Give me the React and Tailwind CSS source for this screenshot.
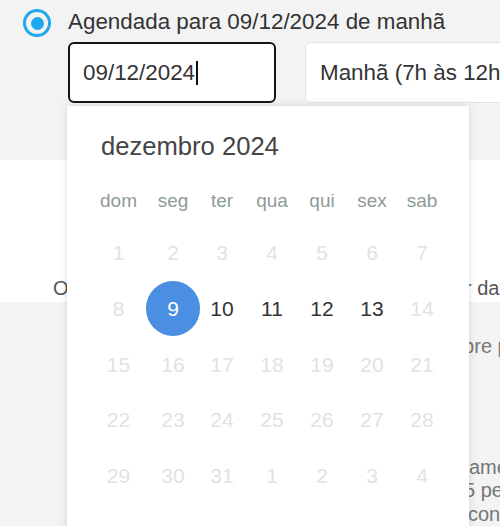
import React from "react";

const rows = [
  [1, 2, 3, 4, 5, 6, 7],
  [8, 9, 10, 11, 12, 13, 14],
  [15, 16, 17, 18, 19, 20, 21],
  [22, 23, 24, 25, 26, 27, 28],
  [29, 30, 31, 1, 2, 3, 4],
];
const heads = ["dom", "seg", "ter", "qua", "qui", "sex", "sab"];
const active = [10, 11, 12, 13];

function Day({ n, ri }) {
  const isSel = ri === 1 && n === 9;
  const isActive = ri === 1 && active.includes(n);
  return (
    <div className="flex h-[55.75px] items-center justify-center">
      {isSel ? (
        <div className="flex h-[55px] w-[54px] shrink-0 items-center justify-center rounded-full bg-[#4a8fe2] text-white">
          {n}
        </div>
      ) : (
        <span className={isActive ? "text-[#333333]" : "text-[#dfe3e3]"}>{n}</span>
      )}
    </div>
  );
}

export default function App() {
  return (
    <div className="relative h-[526px] w-[500px] overflow-hidden bg-[#f3f3f3] font-['Liberation_Sans',Arial,sans-serif]">
      {/* top section */}
      <div className="h-[160px]">
        <div className="flex items-start pl-[23px] pt-[9px]">
          <div className="flex h-[28px] w-[28px] shrink-0 items-center justify-center rounded-full border-[3px] border-[#1fa8ee]">
            <div className="h-[13px] w-[13px] rounded-full bg-[#1fa8ee]" />
          </div>
          <div className="ml-[17px] whitespace-nowrap text-[22.4px] leading-[26px] text-[#333333]">
            Agendada para 09/12/2024 de manhã
          </div>
        </div>
        <div className="mt-[5px] flex pl-[68px]">
          <div className="flex h-[61px] w-[208px] shrink-0 items-center rounded-[6px] border-2 border-[#161616] bg-white pl-[13px] text-[22.4px] text-[#333333]">
            <span>09/12/2024</span>
            <span className="ml-[1px] inline-block h-[24px] w-[1.5px] bg-[#111111]" />
          </div>
          <div className="ml-[29px] flex h-[61px] w-[260px] shrink-0 items-center whitespace-nowrap rounded-[6px] border border-[#e4e4e4] bg-white pl-[14px] text-[22.4px] text-[#333333]">
            Manhã (7h às 12h)
          </div>
        </div>
      </div>

      {/* white band */}
      <div className="flex h-[142px] flex-col justify-end bg-white pb-[3px]">
        <div className="flex whitespace-nowrap text-[20px] leading-[22px] text-[#555555]">
          <span className="ml-[53px] w-[412px] shrink-0 overflow-hidden">O agendamento é feito po</span>
          <span>r data</span>
        </div>
      </div>

      {/* gray lower section */}
      <div className="whitespace-nowrap text-[20px] leading-[22px] text-[#777777]">
        <p className="mt-[33px] pl-[442px]">sobre prazos</p>
        <p className="mt-[99px] pl-[469px] leading-[23px]">amento</p>
        <p className="pl-[464px] leading-[23px]">5 pessoas</p>
        <p className="pl-[468px] leading-[24px]">confirmação</p>
      </div>

      {/* date picker popup */}
      <div className="absolute left-[67px] top-[106px] h-[440px] w-[402px] bg-white pt-[25px] shadow-[0_0_8px_rgba(0,0,0,0.13)]">
        <div className="ml-[34px] h-[30px] text-[25.6px] leading-[30px] text-[#444444]">dezembro 2024</div>
        <div className="mt-[20px] grid h-[40px] grid-cols-[61px_48px_50px_50px_50px_50px_50px] pl-[21px] text-[19px] leading-[40px] text-[#8d9b9a]">
          {heads.map((h) => (
            <div key={h} className="text-center">{h}</div>
          ))}
        </div>
        <div className="mt-[4px] pl-[21px] text-[21px]">
          {rows.map((r, ri) => (
            <div key={ri} className="grid grid-cols-[61px_48px_50px_50px_50px_50px_50px]">
              {r.map((n, ci) => (
                <Day key={ci} n={n} ri={ri} />
              ))}
            </div>
          ))}
        </div>
      </div>
    </div>
  );
}
